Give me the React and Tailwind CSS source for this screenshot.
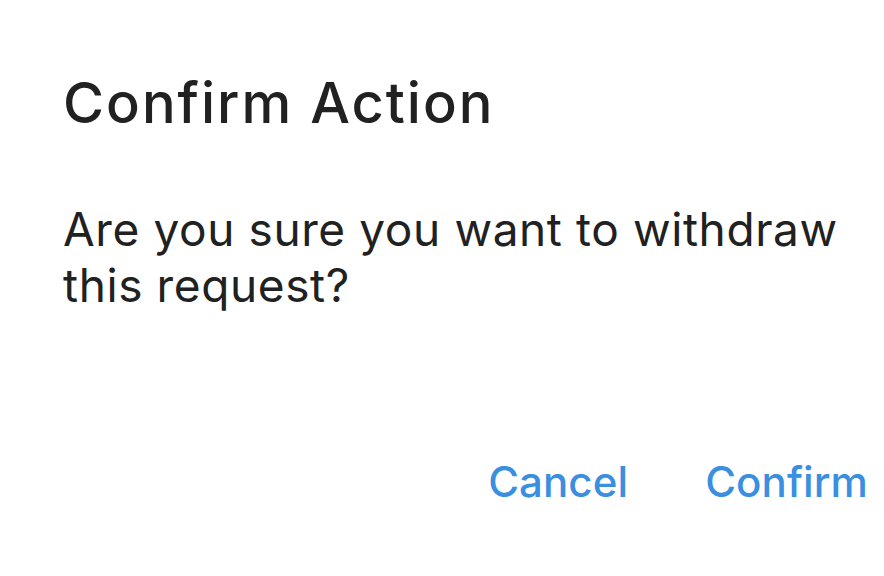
import React from 'react';

export default function App() {
  return (
    <div
      className="w-[884px] h-[576px] bg-white flex flex-col text-[#212121]"
      style={{ fontFamily: 'Inter, "Noto Sans", sans-serif' }}
    >
      <div className="pl-[63px] pr-[30px] pt-[70px]">
        <h1 className="text-[56px] leading-[66px] font-medium tracking-[2px]">Confirm Action</h1>
        <p className="mt-[65px] max-w-[790px] text-[46px] leading-[56px] tracking-[0.6px]">
          Are you sure you want to withdraw this request?
        </p>
      </div>
      <div className="mt-auto mb-[69px] flex justify-end gap-[77px] pr-[16px] text-[#3a8fe0] text-[42px] leading-[50px] font-medium tracking-[0.1px]">
        <button>Cancel</button>
        <button>Confirm</button>
      </div>
    </div>
  );
}
